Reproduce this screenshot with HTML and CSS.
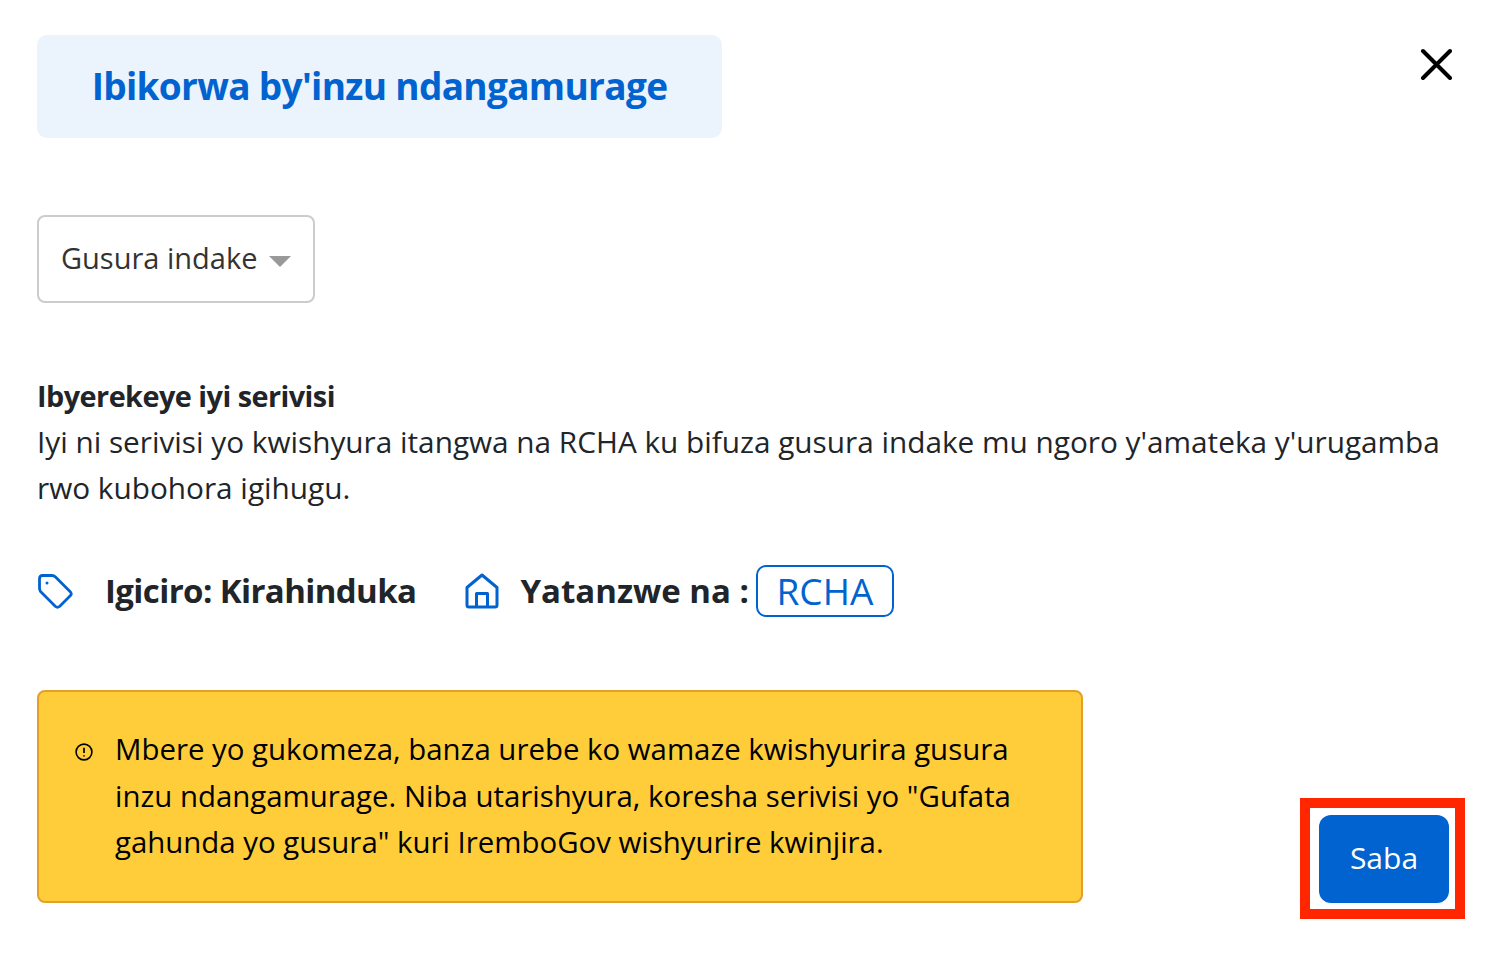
FILE: index.html
```html
<!DOCTYPE html>
<html lang="rw">
<head>
<meta charset="utf-8">
<title>Ibikorwa by'inzu ndangamurage</title>
<link rel="stylesheet" href="styles.css">
</head>
<body>
<main class="page">
  <header class="top">
    <h1 class="title">Ibikorwa by'inzu ndangamurage</h1>
    <button class="close" aria-label="Close">
      <svg width="32" height="32" viewBox="0 0 32 32"><path d="M3 3 L30 30 M30 3 L3 30" fill="none" stroke="#000" stroke-width="4" stroke-linecap="round"/></svg>
    </button>
  </header>
  <div class="select"><span>Gusura indake</span><i class="caret"></i></div>
  <section class="about">
    <strong>Ibyerekeye iyi serivisi</strong><br>
    Iyi ni serivisi yo kwishyura itangwa na RCHA ku bifuza gusura indake mu ngoro y'amateka y'urugamba rwo kubohora igihugu.
  </section>
  <section class="meta">
    <svg class="tag" width="36" height="36" viewBox="0 0 36 36"><path d="M2.5 5.5 Q2.5 2.5 5.5 2.5 L15 2.5 Q17 2.5 18.5 4 L33.5 19 Q35 21 33.5 22.5 L22.5 33.5 Q20.5 35 18.5 33.5 L3.5 18.5 Q2.5 17 2.500 15 Z" fill="none" stroke="#0063cf" stroke-width="2.800" stroke-linejoin="round"/><circle cx="10" cy="10" r="1.500" fill="#0063cf"/></svg>
    <span class="price">Igiciro: Kirahinduka</span>
    <svg class="home" width="34" height="36" viewBox="0 0 34 36"><path d="M2 14.500 L17 2 L32 14.500 V32 Q32 34 30 34 H4 Q2 34 2 32 Z M11.500 34 V20.500 H22.500 V34" fill="none" stroke="#0063cf" stroke-width="3" stroke-linejoin="round"/></svg>
    <span class="by">Yatanzwe na :</span>
    <span class="badge">RCHA</span>
  </section>
  <div class="bottom">
    <div class="alert">
      <svg class="info" width="18" height="18" viewBox="0 0 18 18"><circle cx="9" cy="9" r="7.900" fill="none" stroke="#000" stroke-width="1.600"/><path d="M9 4.800 V10 M9 12.300 V13.500" stroke="#000" stroke-width="1.700" fill="none"/></svg>
      <p>Mbere yo gukomeza, banza urebe ko wamaze kwishyurira gusura<br>inzu ndangamurage. Niba utarishyura, koresha serivisi yo "Gufata<br>gahunda yo gusura" kuri IremboGov wishyurire kwinjira.</p>
    </div>
    <div class="highlight"><button class="next">Saba</button></div>
  </div>
</main>
</body>
</html>
```
FILE: styles.css
```css
* { box-sizing: border-box; }
html, body { margin: 0; background: #fff; }
body { font-family: "Open Sans", "Noto Sans", sans-serif; color: #212529; }
.page { width: 1500px; height: 970px; padding: 35px 35px 0 37px; display: flex; flex-direction: column; }
.top { display: flex; justify-content: space-between; align-items: flex-start; }
.title { margin: 0; width: 685px; height: 103px; padding-bottom: 3px; display: flex; align-items: center; justify-content: center; background: #ebf3fd; border-radius: 10px; color: #0063cf; font-size: 37px; font-weight: 700; letter-spacing: -0.68px; white-space: nowrap; }
.close { margin: 13px 13px 0 0; padding: 0; border: 0; background: none; width: 32px; height: 32px; }
.close svg { display: block; }
.select { margin-top: 77px; width: 278px; height: 88px; border: 2px solid #ccc; border-radius: 8px; padding: 0 0 4px 22px; display: flex; align-items: center; gap: 12px; font-size: 29px; color: #333; }
.caret { width: 0; height: 0; margin-top: 9px; border-left: 11px solid transparent; border-right: 11px solid transparent; border-top: 11px solid #999; }
.about { margin-top: 70px; font-size: 29.760px; line-height: 46px; }
.about strong { font-size: 28.800px; font-weight: 700; letter-spacing: -0.52px; }
.meta { margin-top: 54px; height: 52px; display: flex; align-items: center; font-size: 33px; font-weight: 700; color: #212529; }
.tag { flex: none; }
.price { margin: 0 0 2px 32px; letter-spacing: -0.6px; }
.home { margin-left: 49px; flex: none; }
.by { margin: 0 0 2px 21px; }
.badge { margin-left: 7px; width: 138px; height: 52px; padding-bottom: 2px; justify-content: center; border: 2px solid #0063cf; border-radius: 10px; color: #0063cf; font-size: 37px; font-weight: 400; display: flex; align-items: center; }
.bottom { margin-top: 73px; position: relative; }
.alert { width: 1046px; height: 213px; background: #ffcd39; border: 2px solid #e3a027; border-radius: 8px; padding: 34px 30px 0 36px; display: flex; align-items: flex-start; gap: 22px; color: #000; }
.alert p { margin: 0; font-size: 29.400px; line-height: 46.500px; white-space: nowrap; }
.info { flex: none; margin-top: 17px; }
.highlight { position: absolute; left: 1263px; top: 108px; width: 165px; height: 121px; border: 10px solid #ff2600; padding: 7px 6px 6px 9px; }
.next { display: block; width: 130px; height: 88px; border: 0; border-radius: 12px; background: #0063cf; color: #fff; font-family: inherit; font-size: 30px; padding: 0 0 4px; }
```
